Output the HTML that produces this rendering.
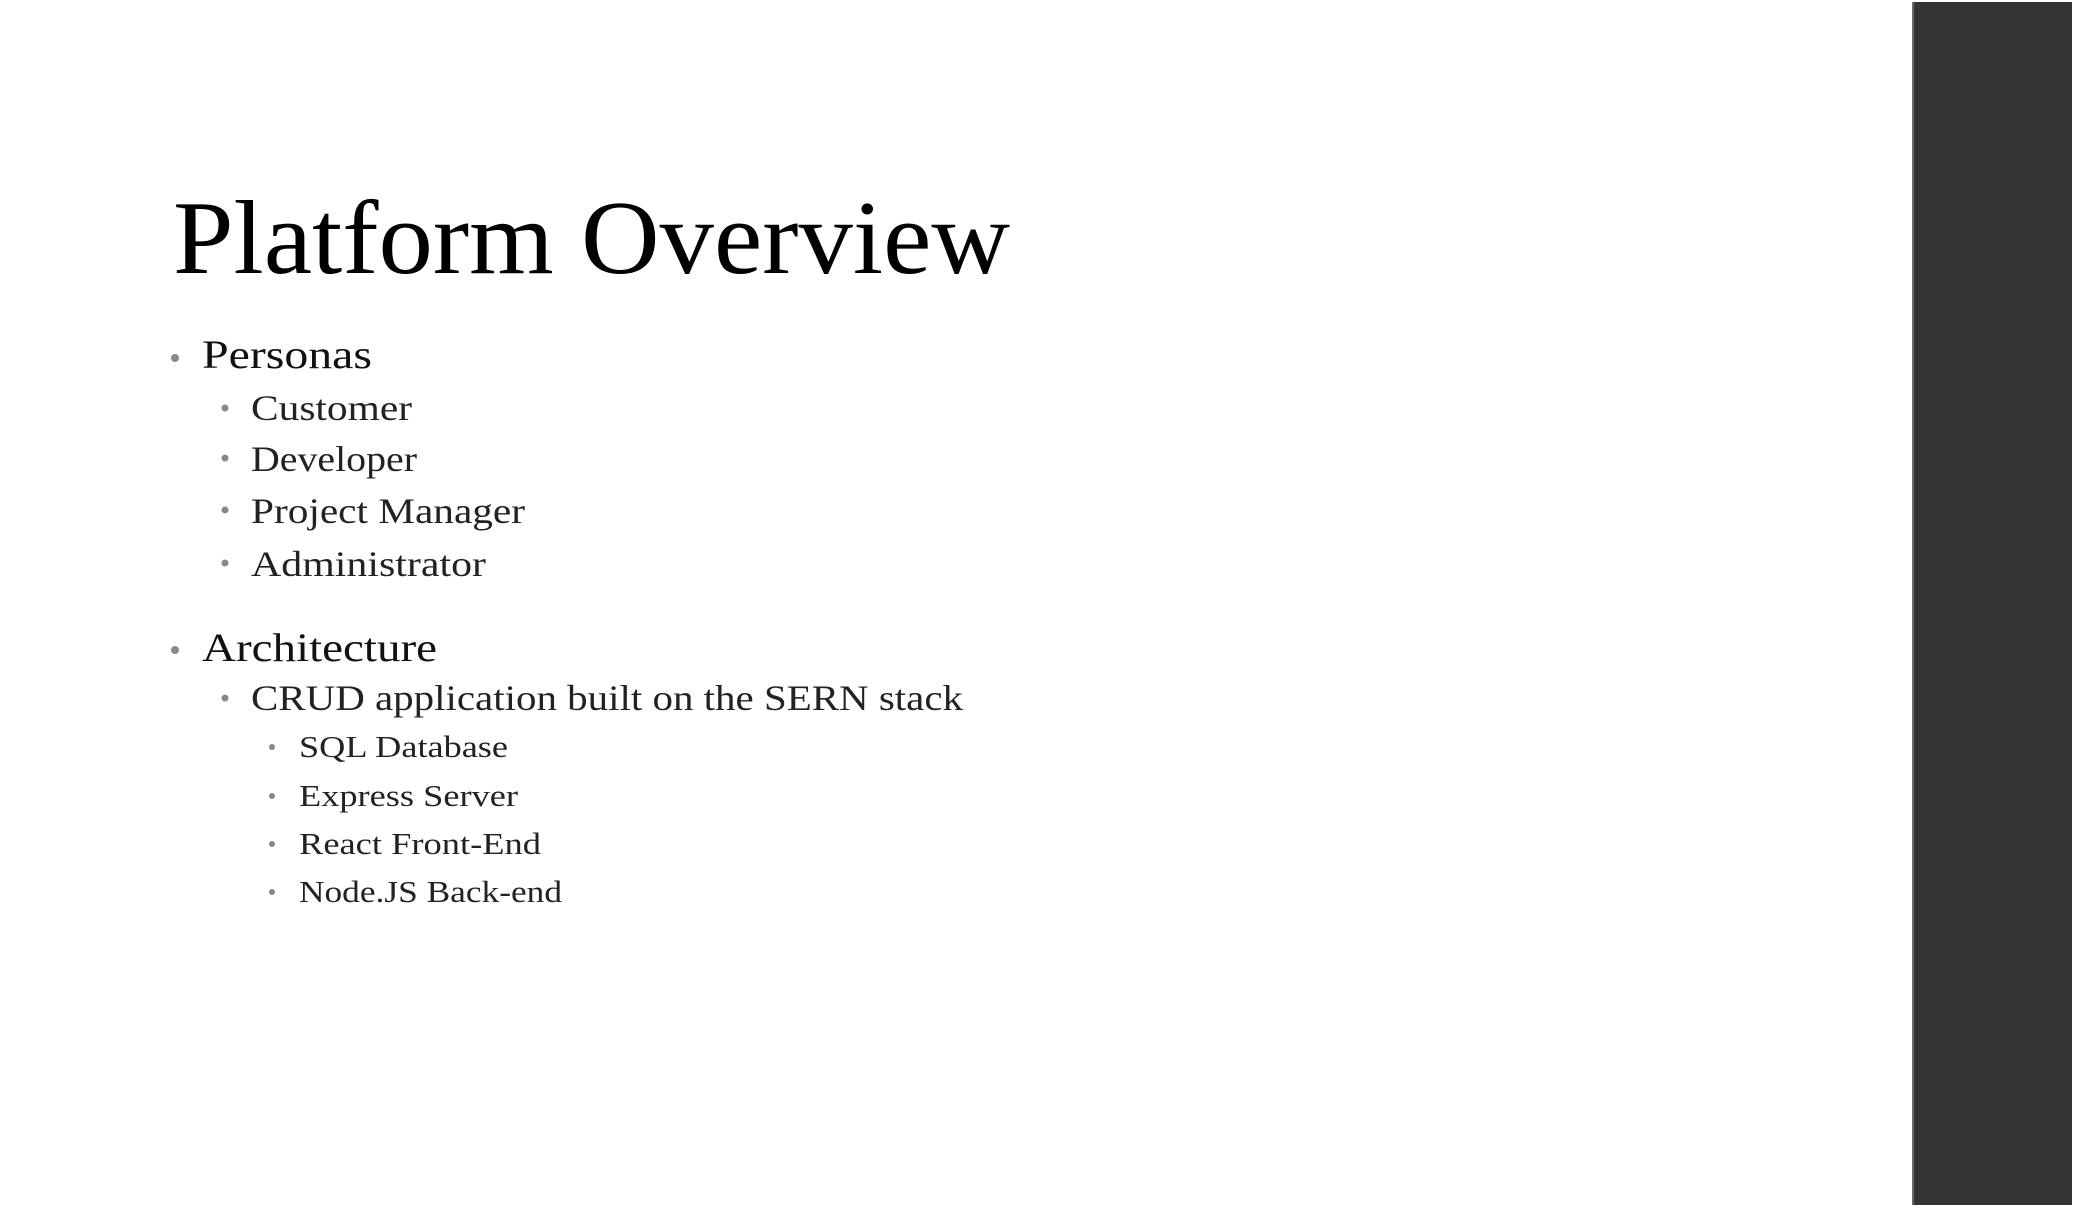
<!DOCTYPE html>
<html><head><meta charset="utf-8"><style>
html,body{margin:0;padding:0;background:#fff;width:2078px;height:1209px;overflow:hidden}
svg{display:block}
text{font-family:"Liberation Serif",serif}
</style></head><body>
<svg width="2078" height="1209" viewBox="0 0 2078 1209">
<rect width="2078" height="1209" fill="#fff"/>
<rect x="1913" y="2" width="159" height="1203" fill="#343436"/>
<rect x="1912" y="2" width="2" height="1203" fill="#6a6a6a"/>
<text x="173" y="273" font-size="105" fill="#000" textLength="837" lengthAdjust="spacingAndGlyphs">Platform Overview</text>
<g fill="#888">
<circle cx="175" cy="358" r="4"/><circle cx="175" cy="650" r="4"/>
<circle cx="225" cy="408" r="3.5"/><circle cx="225" cy="458" r="3.5"/><circle cx="225" cy="510" r="3.5"/><circle cx="225" cy="563" r="3.5"/><circle cx="225" cy="698" r="3.5"/>
<circle cx="272" cy="747" r="3"/><circle cx="272" cy="796" r="3"/><circle cx="272" cy="844" r="3"/><circle cx="272" cy="892" r="3"/>
</g>
<g fill="#111" font-size="40">
<text x="202" y="368" textLength="170" lengthAdjust="spacingAndGlyphs">Personas</text>
<text x="202" y="661" textLength="235" lengthAdjust="spacingAndGlyphs">Architecture</text>
</g>
<g fill="#222" font-size="36">
<text x="251" y="420" textLength="161" lengthAdjust="spacingAndGlyphs">Customer</text>
<text x="251" y="471" textLength="166" lengthAdjust="spacingAndGlyphs">Developer</text>
<text x="251" y="523" textLength="274" lengthAdjust="spacingAndGlyphs">Project Manager</text>
<text x="251" y="576" textLength="235" lengthAdjust="spacingAndGlyphs">Administrator</text>
<text x="251" y="710" textLength="712" lengthAdjust="spacingAndGlyphs">CRUD application built on the SERN stack</text>
</g>
<g fill="#222" font-size="31">
<text x="299" y="757" textLength="209" lengthAdjust="spacingAndGlyphs">SQL Database</text>
<text x="299" y="806" textLength="219" lengthAdjust="spacingAndGlyphs">Express Server</text>
<text x="299" y="854" textLength="242" lengthAdjust="spacingAndGlyphs">React Front-End</text>
<text x="299" y="902" textLength="263" lengthAdjust="spacingAndGlyphs">Node.JS Back-end</text>
</g>
</svg>
</body></html>
